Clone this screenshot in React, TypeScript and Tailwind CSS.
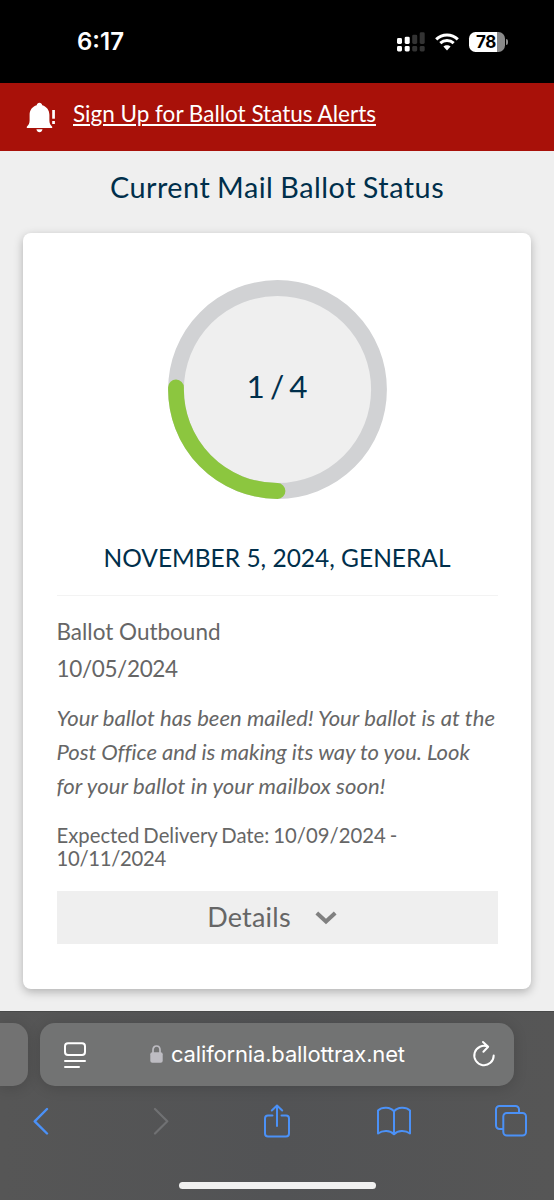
const ACCENT = "#4b91f7";

function StatusBar() {
  return (
    <div className="h-[83px] bg-black text-white flex items-center justify-between pl-[77px] pr-[46px]">
      <span className="font-['Inter'] font-semibold text-[24px] leading-7">6:17</span>
      <div className="flex items-center">
        {/* Dual SIM signal */}
        <svg width="28" height="20" viewBox="0 0 28 20" fill="#fff">
          <rect x="0" y="6" width="5" height="6" rx="1.4" />
          <rect x="0" y="14" width="5" height="5.5" rx="1.4" />
          <rect x="7.7" y="4.7" width="5" height="7.3" rx="1.4" />
          <rect x="7.7" y="14" width="5" height="5.5" rx="1.4" />
          <g fill="#333">
            <rect x="15.2" y="2.7" width="5" height="9.3" rx="1.4" />
            <rect x="15.2" y="14" width="5" height="5.5" rx="1.4" />
            <rect x="22.7" y="0.3" width="5" height="11.7" rx="1.4" />
            <rect x="22.7" y="14" width="5" height="5.5" rx="1.4" />
          </g>
        </svg>
        <svg className="ml-[10px]" width="24" height="18" viewBox="0 0 24 18" fill="none" stroke="#fff">
          <path d="M1.2 6.3C7.2 .6 16.8 .6 22.8 6.3" strokeWidth="3.1" />
          <path d="M5.3 10.2c3.8-3.5 9.6-3.5 13.4 0" strokeWidth="3" />
          <path d="M8.4 13.6c2-1.9 5.2-1.9 7.2 0L12 17.4z" fill="#fff" stroke="none" />
        </svg>
        <div className="ml-[10px] w-9 h-5 rounded-[6.5px] overflow-hidden bg-linear-to-r from-white from-78% to-[#8a8a8a] to-78% text-black flex items-center pl-[7px]">
          <span className="font-['Inter'] font-bold text-[17px] leading-5 tracking-[-0.5px]">78</span>
        </div>
        <div className="ml-[1px] w-[2px] h-[6px] rounded-r-full bg-[#8a8a8a]" />
      </div>
    </div>
  );
}

function AlertBanner() {
  return (
    <div className="h-[68px] bg-[#a81109] flex items-start pl-[26px]">
      <svg className="mt-[19px]" width="30" height="31" viewBox="0 0 30 31" fill="#fff">
        <path d="M13.4.8c1.5 0 2.6 1 2.8 2.4 4.6 1.3 7.2 5 7.2 9.6v5.7c0 2.7.8 4.3 2.8 6.3v1.1H.8v-1.1c2-2 2.8-3.6 2.8-6.3v-5.7c0-4.6 2.5-8.3 7.1-9.6C10.9 1.8 12 .8 13.4.8z" />
        <path d="M10.4 27.3h6.1c-.4 1.9-1.5 2.9-3 2.9s-2.7-1-3.1-2.9z" />
        <rect x="26.2" y="8" width="2.7" height="8.7" />
        <rect x="26.2" y="19" width="2.7" height="3" />
      </svg>
      <a className="ml-[17px] mt-[17px] text-[22.5px] leading-7 text-white underline underline-offset-[2px] decoration-[1.5px] whitespace-nowrap">
        Sign Up for Ballot Status Alerts
      </a>
    </div>
  );
}

function ProgressRing() {
  return (
    <div className="grid place-items-center w-[220px] h-[220px] mx-auto">
      <svg className="col-start-1 row-start-1" width="220" height="220" viewBox="0 0 220 220" fill="none">
        <circle cx="110.5" cy="109.5" r="101.5" fill="#efefef" stroke="#d1d2d4" strokeWidth="15.8" />
        <path d="M110.5 211A101.5 101.5 0 0 1 9 107.5" stroke="#8cc63f" strokeWidth="15.8" strokeLinecap="round" />
      </svg>
      <span className="col-start-1 row-start-1 mb-[9px] text-[31.5px] leading-10 text-[#002f4b] [word-spacing:-3px]">
        1 / 4
      </span>
    </div>
  );
}

function BallotCard() {
  return (
    <section className="mx-[23px] mt-[28px] h-[756px] shrink-0 rounded-lg bg-white shadow-[0_3px_10px_rgba(0,0,0,0.26)] pt-[47px] px-[33.5px] text-[#666]">
      <ProgressRing />
      <h2 className="mt-[38px] h-10 text-center text-[24.5px] leading-10 text-[#002f4b] whitespace-nowrap">
        NOVEMBER 5, 2024, GENERAL
      </h2>
      <hr className="mt-[17px] border-t border-[#f3f3f3]" />
      <div className="mt-[18px] text-[22.5px] leading-[36.5px]">
        <p>Ballot Outbound</p>
        <p className="tracking-[-0.35px]">10/05/2024</p>
      </div>
      <p className="mt-[14px] text-[22.1px] leading-[34px] italic whitespace-nowrap">
        <span className="block tracking-[0.02px]">Your ballot has been mailed! Your ballot is at the</span>
        <span className="block tracking-[-0.07px]">Post Office and is making its way to you. Look</span>
        <span className="block tracking-[0.08px]">for your ballot in your mailbox soon!</span>
      </p>
      <p className="mt-[21px] text-[20.3px] leading-[22.5px] whitespace-nowrap">
        <span className="block [word-spacing:-1.2px]">Expected Delivery Date: 10/09/2024 -</span>
        <span className="block tracking-[-0.3px]">10/11/2024</span>
      </p>
      <button className="mt-[22px] w-full h-[53px] bg-[#efefef] flex items-center justify-center text-[27px] tracking-[0.2px]">
        Details
        <svg className="ml-[24px] mr-[10px]" width="22" height="14" viewBox="0 0 22 14" fill="none" stroke="#808080" strokeWidth="4">
          <path d="M1.8 2l9.2 8.5L20.2 2" />
        </svg>
      </button>
    </section>
  );
}

function BrowserBar() {
  return (
    <footer className="h-[189px] bg-linear-to-r from-[#565656] via-[#525355] to-[#565656] border-t border-[#484949] pt-[11px] font-['Inter']">
      <div className="flex h-[63px]">
        <div className="w-7 bg-[#727272] rounded-r-[15px] shadow-[0_2px_14px_rgba(0,0,0,0.15)]" />
        <div className="ml-3 w-[474px] bg-[#727373] rounded-[15px] shadow-[0_2px_14px_rgba(0,0,0,0.15)] flex items-center pl-6 pr-[18px] text-white">
          <svg width="22" height="26" viewBox="0 0 22 26" fill="none" stroke="#fff" strokeWidth="2" strokeLinecap="round">
            <rect x="1" y="1.3" width="20" height="11.7" rx="3" />
            <path d="M1 19h20M1 25h14" />
          </svg>
          <svg className="ml-[64px] mb-[2px]" width="13" height="18" viewBox="0 0 13 18">
            <path d="M3 8V5c0-2.4 1.4-4 3.5-4S10 2.6 10 5v3" fill="none" stroke="#bdbcc2" strokeWidth="1.7" />
            <rect x="0.3" y="7.3" width="12.4" height="10.5" rx="2" fill="#bdbcc2" />
          </svg>
          <span className="ml-2 mb-[2px] text-[22px] leading-7 tracking-[-0.16px] whitespace-nowrap">california.ballottrax.net</span>
          <svg className="ml-auto mb-[2px]" width="24" height="28" viewBox="0 0 24 28" fill="none" stroke="#fff" strokeWidth="2" strokeLinecap="round" strokeLinejoin="round">
            <path d="M21.7 15.5A9.7 9.7 0 1 1 16 6.7M11 2l5.2 4.7-4.8 5" />
          </svg>
        </div>
      </div>

      <nav className="mt-[15px] pl-[33px] flex items-center h-[40px]">
        <svg width="16" height="28" viewBox="0 0 16 28" fill="none" stroke={ACCENT} strokeWidth="2.4" strokeLinecap="round" strokeLinejoin="round">
          <path d="M14 2L1.7 14.3 14 26.5" />
        </svg>
        <svg className="ml-[104px]" width="16" height="28" viewBox="0 0 16 28" fill="none" stroke="#707173" strokeWidth="2.2" strokeLinecap="round" strokeLinejoin="round">
          <path d="M2 2l12.3 12.3L2 26.5" />
        </svg>
        <svg className="ml-[94px]" width="28" height="34" viewBox="0 0 28 34" fill="none" stroke={ACCENT} strokeWidth="2" strokeLinecap="round" strokeLinejoin="round">
          <path d="M9.5 11.5H5a3 3 0 0 0-3 3v15a3 3 0 0 0 3 3h18a3 3 0 0 0 3-3v-15a3 3 0 0 0-3-3h-4.5M14 22V1.5M8.8 6.5L14 1.5l5.2 5" />
        </svg>
        <svg className="ml-[85px]" width="36" height="30" viewBox="0 0 36 30" fill="none" stroke={ACCENT} strokeWidth="2" strokeLinejoin="round">
          <path d="M18 5.5C14.5.8 6 .8 2 4.5v23c4.500-3.200 12-3.400 16 .7 4-4.100 11.500-3.900 16-.7v-23C30 .8 21.500.8 18 5.500zv22.700" />
        </svg>
        <svg className="ml-[82px]" width="34" height="34" viewBox="0 0 34 34" fill="none" stroke={ACCENT} strokeWidth="2">
          <rect x="9.3" y="9" width="22.7" height="22.5" rx="3.5" />
          <path d="M9 25H5.500A3.500 3.500 0 0 1 2 21.500V5.500A3.500 3.500 0 0 1 5.500 2h16A3.500 3.500 0 0 1 25 5.500V9" />
        </svg>
      </nav>
      <div className="mt-[41px] mx-auto w-[197px] h-[7px] rounded-full bg-[#f0f0f0]" />
    </footer>
  );
}

export default function App() {
  return (
    <main className="w-[554px] h-[1200px] overflow-hidden bg-[#efefef] font-['Lato',sans-serif] flex flex-col">
      <StatusBar />
      <AlertBanner />
      <h1 className="mt-[18px] h-[36px] text-center text-[28.8px] leading-9 tracking-[0.5px] [word-spacing:-1px] text-[#002f4b]">
        Current Mail Ballot Status
      </h1>
      <BallotCard />
      <div className="mt-auto">
        <BrowserBar />
      </div>
    </main>
  );
}
